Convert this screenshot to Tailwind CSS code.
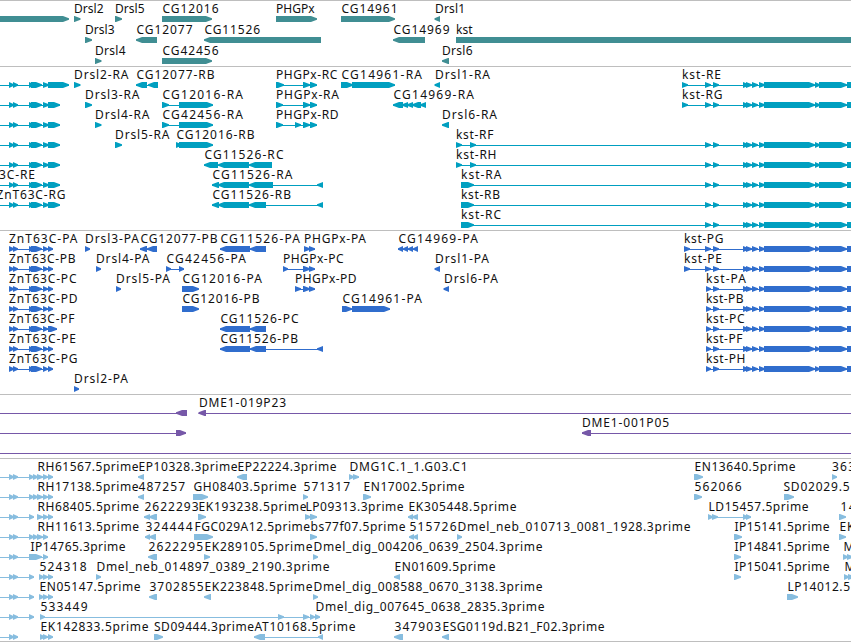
<!DOCTYPE html>
<html lang="en">
<head>
    <meta charset="UTF-8">
    <meta name="viewport" content="width=device-width, initial-scale=1.0">
    <title>Genome Browser</title>
    <script src="https://cdn.jsdelivr.net/npm/@tailwindcss/browser@4"></script>
</head>
<body class="bg-white overflow-hidden">
    <main class="flex flex-col w-[851px] h-[642px] border-b border-[#bebebe] font-['Noto_Sans','Open_Sans',sans-serif] text-[12px] text-black">
        <section class="h-[66px] border-t border-[#bebebe] text-[#408e93]"><svg id="genes" class="block w-full h-full"></svg></section>
        <section class="h-[164px] border-t border-[#bebebe] text-[#009fc0]"><svg id="transcripts" class="block w-full h-full"></svg></section>
        <section class="h-[164px] border-t border-[#bebebe] text-[#306dcd]"><svg id="proteins" class="block w-full h-full"></svg></section>
        <section class="h-[64px] border-t border-[#bebebe] text-[#7658a8]"><svg id="clones" class="block w-full h-full"></svg></section>
        <section class="h-[183px] border-t border-[#bebebe] text-[#87bddf]"><svg id="ests" class="block w-full h-full"></svg></section>
    </main>
    <script>
        // feature: [row, strand, exons, label, labelStart, labelEnd]
        const OFF = [-20, -12];
        const kst = [[705, 711], [713, 719], [743, 749], [746, 752], [752, 758], [759, 765], [764, 815], [815, 820], [819, 847], [847, 870]];
        const kstP = [[706, 711], ...kst.slice(1)];
        const znt = [OFF, [9, 14], [13, 18], [29, 34], [31, 42], [43, 49], [48, 60]];
        const zntP = [[9, 14], [13, 18], [29, 34], [31, 42], [43, 48], [48, 53]];
        const rh = [OFF, [9, 14], [13, 18], [29, 34], [33, 38], [37, 43], [43, 48], [48, 53]];
        const short = [OFF, [9, 14], [13, 18], [29, 34]];

        const genes = [
            [0, 1, [[-20, 69]]],
            [0, 1, [[74, 80.5]], 'Drsl2', 74, 103.5],
            [0, 1, [[115, 122]], 'Drsl5', 115, 144.5],
            [0, 1, [[162, 212]], 'CG12016', 162.5, 218.5],
            [0, 1, [[276, 317]], 'PHGPx', 276, 314.5],
            [0, 1, [[341, 395]], 'CG14961', 341.5, 397.5],
            [0, -1, [[434.5, 440]], 'Drsl1', 435, 465],
            [1, 1, [[85, 92]], 'Drsl3', 85, 114.5],
            [1, -1, [[136, 157]], 'CG12077', 136.5, 192.5],
            [1, -1, [[204, 321]], 'CG11526', 204.5, 260],
            [1, -1, [[393, 425]], 'CG14969', 393.5, 449.5],
            [1, 1, [[456, 870]], 'kst', 456, 472.5],
            [2, 1, [[95, 101.5]], 'Drsl4', 95, 125.5],
            [2, 1, [[162, 212]], 'CG42456', 162.5, 218.5],
            [2, -1, [[442, 449]], 'Drsl6', 442, 472.5]
        ];

        const transcripts = [
            [0, 1, [...znt.slice(0, 6), [48, 69]]],
            [1, 1, znt], [2, 1, znt], [3, 1, znt], [4, 1, znt],
            [5, 1, znt, 'ZnT63C-RE', -32.5, 35],
            [6, 1, znt, 'ZnT63C-RG', -3.5, 65.5],
            [0, 1, [[74, 80.5]], 'Drsl2-RA', 74, 128.5],
            [0, -1, [[136, 147], [148, 158]], 'CG12077-RB', 136.5, 214.5],
            [0, 1, [[276, 284], [303, 310], [310, 317]], 'PHGPx-RC', 276, 337.3],
            [0, 1, [[341, 353], [352, 395]], 'CG14961-RA', 341.5, 422],
            [0, -1, [[434.5, 440]], 'Drsl1-RA', 435, 490],
            [0, 1, [[682, 688], ...kst], 'kst-RE', 682, 721],
            [1, 1, [[85, 92]], 'Drsl3-RA', 85, 139.5],
            [1, 1, [[162, 169], [179, 213]], 'CG12016-RA', 162.5, 243],
            [1, 1, [[276, 283], [303, 310], [310, 317]], 'PHGPx-RA', 276, 339],
            [1, -1, [[393, 403], [402, 408], [407, 413], [412, 421], [420, 426]], 'CG14969-RA', 393.5, 474],
            [1, 1, [[682, 688], ...kst], 'kst-RG', 682, 722.5],
            [2, 1, [[95, 101.5]], 'Drsl4-RA', 95, 149.5],
            [2, 1, [[162, 169], [179, 213]], 'CG42456-RA', 162.5, 243],
            [2, 1, [[276, 283], [295, 301], [303, 310], [310, 317]], 'PHGPx-RD', 276, 338.5],
            [2, -1, [[442, 449]], 'Drsl6-RA', 442, 497],
            [3, 1, [[115, 122]], 'Drsl5-RA', 115, 169.5],
            [3, 1, [[176, 182], [179, 213]], 'CG12016-RB', 176.5, 254.5],
            [3, 1, [[456, 462], [470, 476], ...kst], 'kst-RF', 456, 493.5],
            [4, -1, [[204, 218], [218, 249], [249, 272]], 'CG11526-RC', 204.5, 283.5],
            [4, 1, [[456, 462], [470, 476], ...kst], 'kst-RH', 456, 496.5],
            [5, -1, [[212, 219], [218, 249], [249, 273], [317, 323]], 'CG11526-RA', 212.5, 292.5],
            [5, 1, [[461, 474], ...kst], 'kst-RA', 461, 501.5],
            [6, -1, [[212, 219], [218, 249], [249, 266], [317, 323]], 'CG11526-RB', 212.5, 291],
            [6, 1, [[461, 474], ...kst], 'kst-RB', 461, 500],
            [7, 1, [[461, 474], ...kst], 'kst-RC', 461, 501]
        ];

        const proteins = [
            [0, 1, zntP, 'ZnT63C-PA', 9, 77.5],
            [1, 1, zntP, 'ZnT63C-PB', 9, 75.5],
            [2, 1, zntP, 'ZnT63C-PC', 9, 76.5],
            [3, 1, zntP, 'ZnT63C-PD', 9, 77.5],
            [4, 1, [...zntP.slice(0, 5), [48, 57]], 'ZnT63C-PF', 9, 74.5],
            [5, 1, zntP, 'ZnT63C-PE', 9, 76],
            [6, 1, zntP, 'ZnT63C-PG', 9, 77.5],
            [7, 1, [[74, 79]], 'Drsl2-PA', 74, 128],
            [0, 1, [[85, 90]], 'Drsl3-PA', 85, 139],
            [0, -1, [[140, 147], [147, 157]], 'CG12077-PB', 140.5, 217.5],
            [0, -1, [[220, 250], [250, 266]], 'CG11526-PA', 220.5, 300],
            [0, 1, [[304, 310], [309, 315]], 'PHGPx-PA', 304, 366],
            [0, -1, [[398, 403], [403, 408], [408, 413], [413, 418]], 'CG14969-PA', 398.5, 478],
            [0, 1, [[684, 690], ...kst], 'kst-PG', 684, 723.5],
            [1, 1, [[96, 101]], 'Drsl4-PA', 96, 149.5],
            [1, 1, [[166, 171], [179, 184]], 'CG42456-PA', 166.5, 246],
            [1, 1, [[283, 288], [303, 310], [309, 315]], 'PHGPx-PC', 283, 343.5],
            [1, -1, [[434.5, 440]], 'Drsl1-PA', 435, 489],
            [1, 1, [[684, 690], ...kst], 'kst-PE', 684, 722],
            [2, 1, [[116, 121]], 'Drsl5-PA', 116, 170],
            [2, 1, [[182, 199]], 'CG12016-PA', 182.5, 262],
            [2, 1, [[295, 301], [303, 310], [309, 315]], 'PHGPx-PD', 295, 356.5],
            [2, -1, [[443.5, 449]], 'Drsl6-PA', 444, 498],
            [2, 1, kstP, 'kst-PA', 706, 746],
            [3, 1, [[182, 199]], 'CG12016-PB', 182.5, 259.5],
            [3, 1, [[342, 352], [352, 390]], 'CG14961-PA', 342.5, 422],
            [3, 1, kstP, 'kst-PB', 706, 743.5],
            [4, -1, [[220, 250], [250, 266]], 'CG11526-PC', 220.5, 298.5],
            [4, 1, kstP, 'kst-PC', 706, 744.5],
            [5, -1, [[220, 250], [250, 266], [317, 323]], 'CG11526-PB', 220.5, 298],
            [5, 1, kstP, 'kst-PF', 706, 742.5],
            [6, 1, kstP, 'kst-PH', 706, 745.5]
        ];

        const clones = [
            [0, -1, [OFF, [176, 187]]],
            [0, -1, [[198.5, 206], [860, 870]], 'DME1-019P23', 199, 286],
            [1, 1, [OFF, [176, 186]]],
            [1, -1, [[582, 591], [860, 870]], 'DME1-001P05', 582, 669],
            [2, 1, [OFF, [860, 870]]]
        ];

        const ests = [
            [0, 1, rh, 'RH61567.5prime', 37.5, 138.5],
            [0, -1, [[138, 144]], 'EP10328.3prime', 138.5, 237.5],
            [0, -1, [[237, 247]], 'EP22224.3prime', 237.5, 336.5],
            [0, 1, [[349, 354], [353, 359]], 'DMG1C.1_1.G03.C1', 349.5, 467.5],
            [0, 1, [[694, 703]], 'EN13640.5prime', 694.5, 795.5],
            [0, 1, [[832, 837]], '363', 832, 855],
            [1, 1, rh, 'RH17138.5prime', 37.5, 138.5],
            [1, -1, [[138, 144]], '487257', 138.5, 185],
            [1, 1, [[193, 208]], 'GH08403.5prime', 193.5, 296.5],
            [1, 1, [[303, 308]], '571317', 303.5, 350],
            [1, 1, [[363, 371]], 'EN17002.5prime', 363.5, 464.5],
            [1, 1, [[694, 702]], '562066', 694.5, 741.5],
            [1, 1, [[784, 794]], 'SD02029.5', 783.5, 849.5],
            [2, 1, short],
            [2, 1, [[37, 43], [43, 48], [48, 53]], 'RH68405.5prime', 37.5, 139],
            [2, -1, [[144, 150], [149, 157]], '2622293', 144.5, 198.5],
            [2, 1, [[198, 206]], 'EK193238.5prime', 198.5, 306.5],
            [2, 1, [[305, 311], [310, 317]], 'LP09313.3prime', 305.5, 403.5],
            [2, -1, [[408, 413], [412, 418]], 'EK305448.5prime', 408.5, 516.5],
            [2, 1, [[708, 713], [712, 718], [743, 748], [746, 751]], 'LD15457.5prime', 708.5, 808.5],
            [2, 1, [[839, 846]], '14', 840.5, 855.5],
            [3, 1, rh.slice(0, 7), 'RH11613.5prime', 37.5, 139],
            [3, -1, [[145, 150], [149, 156]], '324444', 145.5, 192.5],
            [3, 1, [[194, 213]], 'FGC029A12.5prime', 194.5, 310],
            [3, 1, [[310, 317]], 'bs77f07.5prime', 310.5, 405.5],
            [3, -1, [[409, 414], [413, 418]], '515726', 409.5, 456.5],
            [3, 1, [[457, 462]], 'Dmel_neb_010713_0081_1928.3prime', 457.5, 690.5],
            [3, 1, [[734, 742]], 'IP15141.5prime', 734.5, 829.5],
            [3, 1, [[839, 846]], 'EK', 839.5, 854.5],
            [4, 1, [OFF, [9, 14], [13, 18], [29, 42], [43, 48]], 'IP14765.3prime', 30.5, 125.5],
            [4, -1, [[148, 157]], '2622295', 148.5, 203],
            [4, 1, [[204, 210]], 'EK289105.5prime', 204.5, 312.5],
            [4, 1, [[313, 318]], 'Dmel_dig_004206_0639_2504.3prime', 313.5, 542.5],
            [4, 1, [[734, 741]], 'IP14841.5prime', 734.5, 829.5],
            [4, 1, [[843, 848], [847, 853]], 'M', 843.5, 853.5],
            [5, 1, short],
            [5, 1, [[39, 44], [43, 48], [48, 53]], '524318', 39.5, 86.5],
            [5, 1, [[96, 101]], 'Dmel_neb_014897_0389_2190.3prime', 96.5, 329.5],
            [5, -1, [[394, 400]], 'EN01609.5prime', 394.5, 495.5],
            [5, 1, [[734, 741]], 'IP15041.5prime', 734.5, 829.5],
            [5, 1, [[844, 849], [848, 854]], 'M', 844.5, 854.5],
            [6, 1, short],
            [6, 1, [[39, 44], [43, 48], [48, 53]], 'EN05147.5prime', 39.5, 140.5],
            [6, -1, [[149, 157]], '3702855', 149.5, 203.5],
            [6, -1, [[204, 211]], 'EK223848.5prime', 204.5, 312.5],
            [6, 1, [[313, 318]], 'Dmel_dig_008588_0670_3138.3prime', 313.5, 542.5],
            [6, 1, [[787, 798]], 'LP14012.5', 787.5, 850],
            [7, 1, short],
            [7, 1, [[40, 45], [278, 284], [303, 309], [310, 315], [315, 320]], '533449', 40.5, 87.5],
            [7, 1, [], 'Dmel_dig_007645_0638_2835.3prime', 315.5, 544.5],
            [8, 1, [OFF, [9, 14], [13, 18]]],
            [8, 1, [[40, 45], [43, 48], [48, 53]], 'EK142833.5prime', 40.5, 148.5],
            [8, 1, [[154, 163]], 'SD09444.3prime', 154, 254],
            [8, -1, [[254, 265], [318, 323]], 'AT10168.5prime', 254.5, 355.5],
            [8, -1, [[394, 403]], '347903', 394.5, 441],
            [8, -1, [[442, 449]], 'ESG0119d.B21_F02.3prime', 442.5, 604.5]
        ];

        // box with a slightly rounded arrow head on the downstream end
        const exonPath = (s, e, y, strand) => {
            const head = Math.min(6, e - s);
            const [tail, tip] = strand > 0 ? [s, e] : [e, s];
            const neck = tip - strand * head;
            const mid = tip - strand * head * 0.45;
            return `M${tail} ${y}H${neck}L${mid} ${y + 1.2}L${tip} ${y + 2.3}V${y + 3.7}L${mid} ${y + 4.8}L${neck} ${y + 6}H${tail}Z`;
        };

        const drawTrack = (id, features, pitch) => {
            let out = '';
            for (const [row, strand, exons, label, x1, x2] of features) {
                const y = 15 + row * pitch;
                if (exons.length > 1) {
                    const from = exons[0][0];
                    const to = exons[exons.length - 1][1];
                    out += `<rect x="${from}" y="${y + 3}" width="${to - from}" height="1" fill="currentColor"/>`;
                }
                for (const [s, e] of exons) {
                    out += `<path d="${exonPath(s, e, y, strand)}" fill="currentColor"/>`;
                }
                if (label) {
                    out += `<text x="${x1}" y="${y - 3}" textLength="${x2 - x1}" fill="#111">${label}</text>`;
                }
            }
            document.getElementById(id).innerHTML = out;
        };

        drawTrack('genes', genes, 21);
        drawTrack('transcripts', transcripts, 20);
        drawTrack('proteins', proteins, 20);
        drawTrack('clones', clones, 20);
        drawTrack('ests', ests, 20);
    </script>
</body>
</html>
